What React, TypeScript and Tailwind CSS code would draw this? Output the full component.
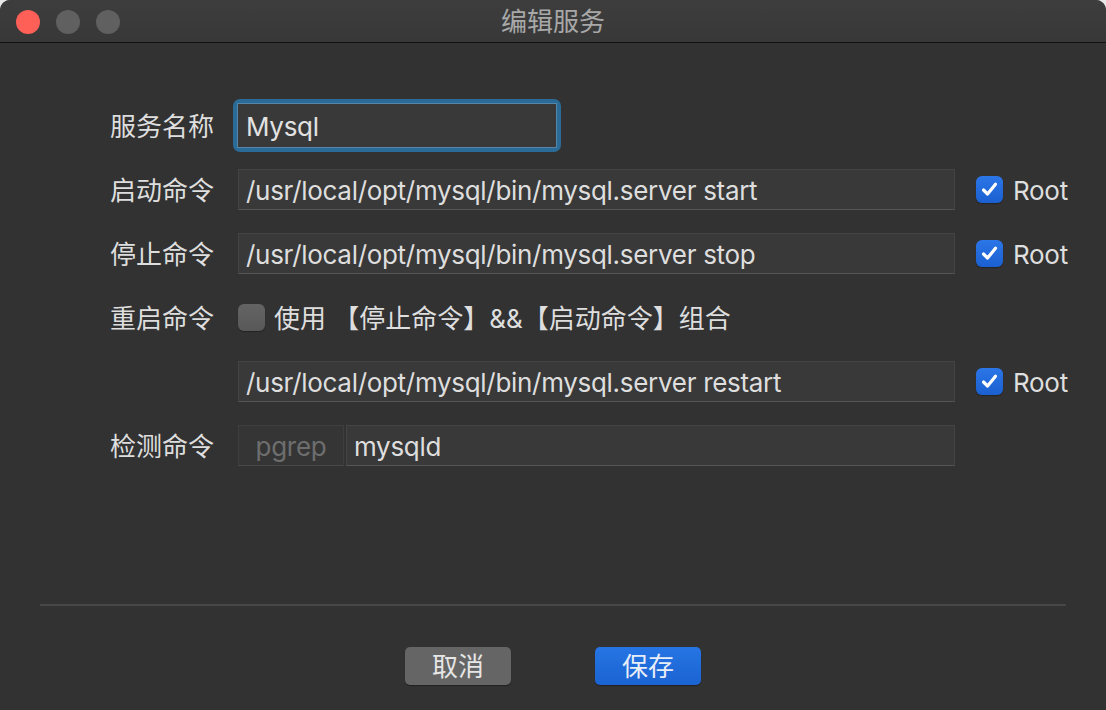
import React from 'react';

const font = { fontFamily: 'Inter, "Noto Sans CJK SC", sans-serif' };

const Check = ({ checked }: { checked: boolean }) =>
    checked ? (
        <div className="w-[27px] h-[27px] rounded-[6px] bg-gradient-to-b from-[#2b76e8] to-[#1b60d0] flex items-center justify-center shadow-[0_1px_1px_rgba(0,0,0,0.3)]">
            <svg width="19" height="19" viewBox="0 0 19 19" fill="none">
                <path d="M3.5 10 L7.6 14 L15.5 4.2" stroke="#ffffff" strokeWidth="3.2" strokeLinecap="round" strokeLinejoin="round" />
            </svg>
        </div>
    ) : (
        <div className="w-[27px] h-[27px] rounded-[6px] bg-gradient-to-b from-[#646464] to-[#585858] shadow-[0_1px_1px_rgba(0,0,0,0.3)]" />
    );

const Field = ({ value, className = 'w-[717px]' }: { value: string; className?: string }) => (
    <div className={`${className} h-[41px] bg-[#393939] border border-[#444444] border-b-[#555555] flex items-center pl-[7px] pt-[4px] text-[26px] tracking-[-0.3px] text-[#dedede] leading-none`}>
        {value}
    </div>
);

const RootBox = () => (
    <div className="flex items-center ml-[21px] gap-[10px]">
        <Check checked />
        <span className="pt-[3px] text-[26px] tracking-[-0.3px] text-[#dedede] leading-none">Root</span>
    </div>
);

const Row = ({ label, children }: { label?: string; children: React.ReactNode }) => (
    <div className="h-[64px] flex items-center">
        <div className="w-[128px] pt-[4px] text-[26px] text-[#dedede] leading-none">{label}</div>
        {children}
    </div>
);

export default function App() {
    return (
        <div className="w-[1106px] h-[710px] bg-[#e8e8e8]" style={font}>
            <div className="w-full h-full rounded-t-[10px] overflow-hidden bg-[#323232] flex flex-col">
                {/* title bar */}
                <div className="h-[43px] bg-gradient-to-b from-[#3d3d3d] to-[#383838] border-b border-[#111111] relative flex items-center justify-center shrink-0">
                    <div className="absolute left-[16px] top-[10px] flex gap-[16px]">
                        <div className="w-[24px] h-[24px] rounded-full bg-[#fe5f57]" />
                        <div className="w-[24px] h-[24px] rounded-full bg-[#606060]" />
                        <div className="w-[24px] h-[24px] rounded-full bg-[#606060]" />
                    </div>
                    <span className="pt-[2px] text-[26px] text-[#a8a8a8] leading-none">编辑服务</span>
                </div>

                <div className="pt-[50px] pl-[110px]">
                    <Row label="服务名称">
                        <div className="ml-[-5px] w-[328px] h-[53px] rounded-[7px] bg-[#2b6b98] p-[4px]">
                            <div className="w-full h-full bg-[#393939] border border-[#5585a8] flex items-center pl-[8px] pt-[4px] text-[26px] tracking-[-0.3px] text-[#e2e2e2] leading-none">
                                Mysql
                            </div>
                        </div>
                    </Row>
                    <Row label="启动命令">
                        <Field value="/usr/local/opt/mysql/bin/mysql.server start" />
                        <RootBox />
                    </Row>
                    <Row label="停止命令">
                        <Field value="/usr/local/opt/mysql/bin/mysql.server stop" />
                        <RootBox />
                    </Row>
                    <Row label="重启命令">
                        <Check checked={false} />
                        <span className="ml-[9px] pt-[4px] text-[26px] text-[#dedede] leading-none">使用 【停止命令】&&【启动命令】组合</span>
                    </Row>
                    <Row>
                        <Field value="/usr/local/opt/mysql/bin/mysql.server restart" />
                        <RootBox />
                    </Row>
                    <Row label="检测命令">
                        <div className="flex gap-[2px]">
                            <div className="w-[106px] h-[41px] bg-[#353535] border border-[#3e3e3e] border-b-[#484848] flex items-center justify-center pt-[4px] text-[26px] tracking-[-0.3px] text-[#6e6e6e] leading-none">
                                pgrep
                            </div>
                            <Field value="mysqld" className="w-[609px]" />
                        </div>
                    </Row>
                </div>

                <div className="mt-[127px] mx-[40px] h-[2px] bg-[#474747]" />

                <div className="mt-[41px] flex justify-center gap-[84px]">
                    <button className="w-[106px] h-[38px] rounded-[5px] bg-[#656565] pt-[2px] text-[26px] text-[#e6e6e6] leading-none shadow-[0_1px_1px_rgba(0,0,0,0.35)]">
                        取消
                    </button>
                    <button className="w-[106px] h-[38px] rounded-[5px] bg-gradient-to-b from-[#2675e4] to-[#1b63d2] pt-[2px] text-[26px] text-[#e8eef8] leading-none shadow-[0_1px_1px_rgba(0,0,0,0.35)]">
                        保存
                    </button>
                </div>
            </div>
        </div>
    );
}
